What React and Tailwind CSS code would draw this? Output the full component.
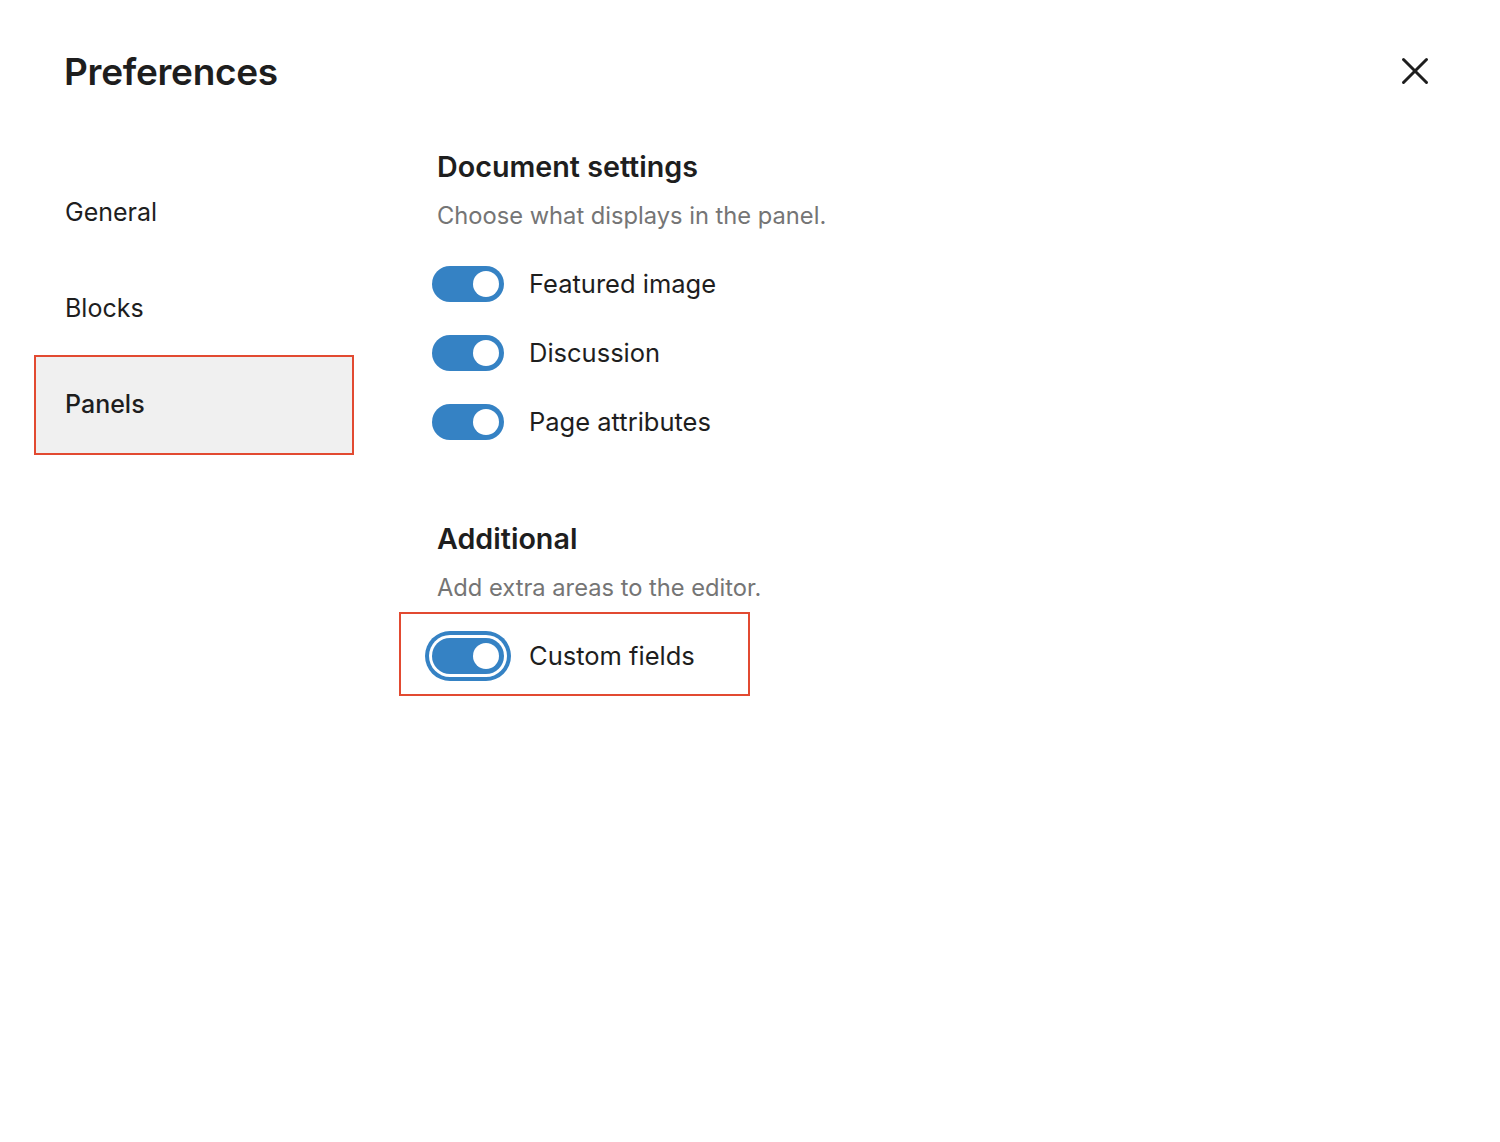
import { X } from 'lucide-react';

const docToggles = ['Featured image', 'Discussion', 'Page attributes'];

function Toggle({ focused }) {
  return (
    <span
      className={`relative inline-flex w-[72px] h-[36px] shrink-0 items-center rounded-full bg-[#3582c4] ${
        focused ? 'shadow-[0_0_0_3px_#ffffff,0_0_0_7px_#3582c4]' : ''
      }`}
    >
      <span className="absolute right-[5px] w-[26px] h-[26px] rounded-full bg-white" />
    </span>
  );
}

function ToggleRow({ label, focused }) {
  return (
    <div className="flex items-center gap-[25px] h-[36px] -ml-[5px]">
      <Toggle focused={focused} />
      <span className="text-[25.5px] text-[#1e1e1e] leading-none">{label}</span>
    </div>
  );
}

export default function App() {
  return (
    <div className="min-h-screen bg-white font-['Inter',sans-serif] text-[#1e1e1e]">
      {/* HEADER */}
      <div className="flex items-center justify-between pl-[64px] pr-[62px] pt-[50px] h-[92px]">
        <h1 className="text-[37px] font-semibold tracking-[-0.3px] leading-none">Preferences</h1>
        <button className="text-[#1e1e1e]">
          <X size={46} strokeWidth={1.55} />
        </button>
      </div>

      <div className="flex pt-[58px]">
        {/* NAV */}
        <nav className="ml-[34px] w-[320px] shrink-0 pt-[15px]">
          <div className="h-[96px] flex items-center px-[31px] text-[25px]">General</div>
          <div className="h-[96px] flex items-center px-[31px] text-[25px]">Blocks</div>
          <div className="h-[100px] -mt-[2px] flex items-center px-[29px] text-[25px] font-medium bg-[#f0f0f0] border-2 border-[#e24a31]">
            Panels
          </div>
        </nav>

        {/* CONTENT */}
        <div className="ml-[83px] flex flex-col">
          <h2 className="text-[28.7px] font-semibold leading-[34px]">Document settings</h2>
          <p className="mt-[17px] text-[23.7px] text-[#757575] leading-[30px]">Choose what displays in the panel.</p>
          <div className="mt-[35px] flex flex-col gap-[33px]">
            {docToggles.map((t) => (
              <ToggleRow key={t} label={t} />
            ))}
          </div>

          <h2 className="mt-[82px] text-[28.7px] font-semibold leading-[34px]">Additional</h2>
          <p className="mt-[17px] text-[23.7px] text-[#757575] leading-[30px]">Add extra areas to the editor.</p>
          <div className="relative mt-[35px] w-fit">
            <ToggleRow label="Custom fields" focused />
            <span className="absolute -left-[38px] -right-[55px] -top-[26px] -bottom-[22px] border-2 border-[#e24a31] pointer-events-none" />
          </div>
        </div>
      </div>
    </div>
  );
}
